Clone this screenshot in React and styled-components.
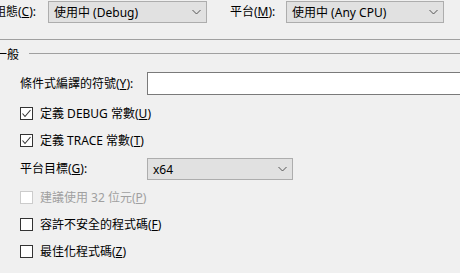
import React from 'react'
import styled, { createGlobalStyle } from 'styled-components'

const Global = createGlobalStyle`
body {
  margin: 0;
  background: #f0f0f0;
  font-family: "Noto Sans", "Noto Sans CJK TC", sans-serif;
  font-size: 12px;
  color: #000;
}
`

const Page = styled.div`
width: 460px;
height: 273px;
overflow: hidden;
background: #f0f0f0;
`

const TopBar = styled.div`
display: flex;
align-items: flex-start;
height: 38px;
padding-top: 1px;
margin-left: -6px;
border-bottom: 1px solid #a0a0a0;
`

const Label = styled.span`
display: inline-block;
width: ${({ w }) => w}px;
line-height: 22px;
white-space: nowrap;
color: ${({ disabled }) => (disabled ? '#a0a0a0' : '#000')};
`

const Combo = styled.div`
box-sizing: border-box;
width: ${({ w }) => w}px;
height: 22px;
display: flex;
align-items: center;
justify-content: space-between;
padding: 0 5px 0 5px;
background: #e1e1e1;
border: 1px solid #adadad;
white-space: nowrap;
`

const Group = styled.div`
display: flex;
align-items: center;
height: 27px;
margin-left: -5px;
`

const GroupLine = styled.div`
flex: 1;
height: 1px;
background: #a0a0a0;
margin-left: 10px;
`

const Body = styled.div`
display: flex;
flex-direction: column;
padding-left: 20px;
`

const Row = styled.div`
display: flex;
align-items: center;
height: ${({ h }) => h}px;
`

const TextBox = styled.div`
box-sizing: border-box;
flex: 1;
height: 23px;
background: #fff;
border: 1px solid #7a7a7a;
border-right: none;
`

const Box = styled.span`
box-sizing: border-box;
width: 13px;
height: 13px;
margin-right: 7px;
display: inline-flex;
align-items: center;
justify-content: center;
background: #fff;
border: 1px solid ${({ disabled }) => (disabled ? '#cccccc' : '#333333')};
`

const Chevron = () => (
  <svg width="9" height="6" viewBox="0 0 9 6">
    <polyline points="0.5,1 4.5,5 8.5,1" fill="none" stroke="#555" strokeWidth="1" />
  </svg>
)

const Check = ({ checked, disabled, children }) => (
  <Row h={27}>
    <Box disabled={disabled}>
      {checked && (
        <svg width="11" height="11" viewBox="0 0 11 11">
          <polyline points="1.5,5.5 4,8.5 9.5,2" fill="none" stroke="#333" strokeWidth="1.1" />
        </svg>
      )}
    </Box>
    <Label disabled={disabled}>{children}</Label>
  </Row>
)

export default function App() {
  return (
    <Page>
      <Global />
      <TopBar>
        <Label w={54}>組態(<u>C</u>):</Label>
        <Combo w={159}>使用中 (Debug)<Chevron /></Combo>
        <Label w={56} style={{ marginLeft: 23 }}>平台(<u>M</u>):</Label>
        <Combo w={158}>使用中 (Any CPU)<Chevron /></Combo>
      </TopBar>
      <Group>
        <span>一般</span>
        <GroupLine />
      </Group>
      <Body>
        <Row h={33}>
          <Label w={127}>條件式編譯的符號(<u>Y</u>):</Label>
          <TextBox />
        </Row>
        <Check checked>定義 DEBUG 常數(<u>U</u>)</Check>
        <Check checked>定義 TRACE 常數(<u>T</u>)</Check>
        <Row h={30}>
          <Label w={127}>平台目標(<u>G</u>):</Label>
          <Combo w={146}>x64<Chevron /></Combo>
        </Row>
        <Check disabled>建議使用 32 位元(<u>P</u>)</Check>
        <Check>容許不安全的程式碼(<u>F</u>)</Check>
        <Check>最佳化程式碼(<u>Z</u>)</Check>
      </Body>
    </Page>
  )
}
